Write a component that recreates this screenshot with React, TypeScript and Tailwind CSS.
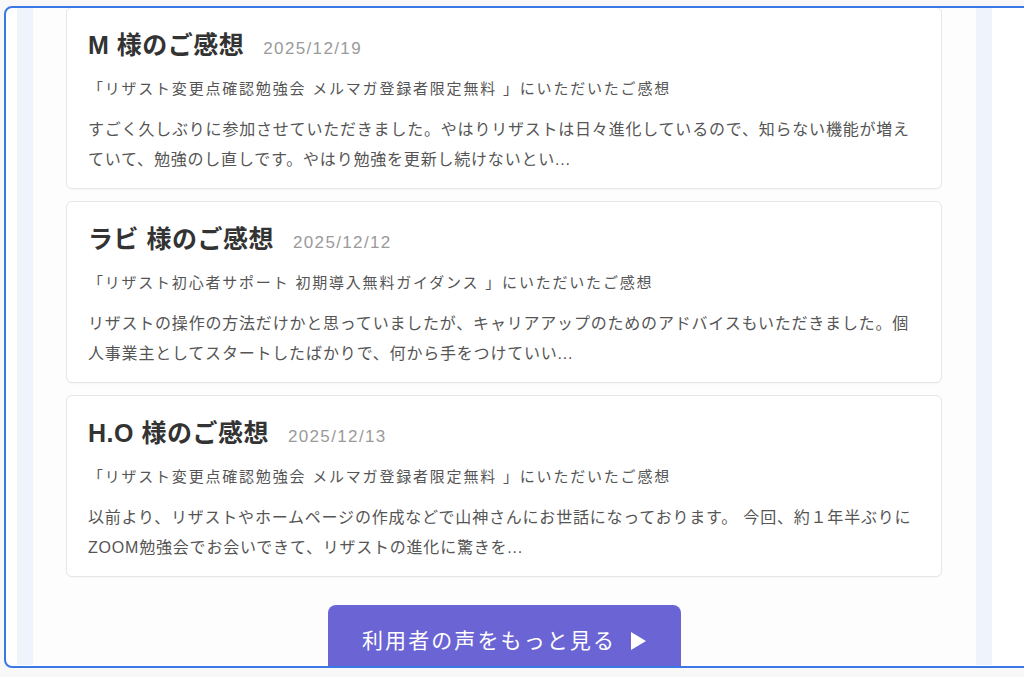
const reviews = [
  {
    name: "M",
    date: "2025/12/19",
    event: "「リザスト変更点確認勉強会 メルマガ登録者限定無料 」にいただいたご感想",
    body: "すごく久しぶりに参加させていただきました。やはりリザストは日々進化しているので、知らない機能が増えていて、勉強のし直しです。やはり勉強を更新し続けないとい...",
  },
  {
    name: "ラビ",
    date: "2025/12/12",
    event: "「リザスト初心者サポート 初期導入無料ガイダンス 」にいただいたご感想",
    body: "リザストの操作の方法だけかと思っていましたが、キャリアアップのためのアドバイスもいただきました。個人事業主としてスタートしたばかりで、何から手をつけていい...",
  },
  {
    name: "H.O",
    date: "2025/12/13",
    event: "「リザスト変更点確認勉強会 メルマガ登録者限定無料 」にいただいたご感想",
    body: "以前より、リザストやホームページの作成などで山神さんにお世話になっております。 今回、約１年半ぶりにZOOM勉強会でお会いできて、リザストの進化に驚きを...",
  },
];

const font = "font-['Liberation_Sans','Noto_Sans_CJK_JP',sans-serif]";

const ReviewCard = ({ r }: { r: (typeof reviews)[number] }) => (
  <div className="bg-white border border-[#e6e6e6] rounded-md px-[21px] pt-[20px] pb-[13px] shadow-[0_1px_2px_rgba(0,0,0,0.03)]">
    <div className="flex items-baseline">
      <h3 className="text-[25px] leading-[34px] font-bold tracking-[0.02em] text-[#333]">{r.name} 様のご感想</h3>
      <span className="ml-[19px] text-[17px] tracking-[0.08em] text-[#9a9a9a]">{r.date}</span>
    </div>
    <p className="mt-[15px] text-[15px] leading-[24px] tracking-[0.12em] text-[#555]">{r.event}</p>
    <p className="mt-[14px] text-[16px] leading-[30px] tracking-[0.05em] text-[#555]">{r.body}</p>
  </div>
);

export default function App() {
  return (
    <div className={`w-[1024px] h-[677px] overflow-hidden bg-[#f8f8f8] pt-[6px] pl-[4px] ${font}`}>
      <div className="w-[1040px] h-[662px] border-2 border-[#3b78e6] rounded-lg overflow-hidden bg-white pl-[11px]">
        <div className="w-[975px] h-full bg-[#eff3fc] px-[16px]">
          <main className="h-full bg-[#fdfdfd] pl-[33px] pr-[34px]">
            <div className="flex flex-col gap-[12px] -mt-[1px]">
              {reviews.map((r) => (
                <ReviewCard key={r.name} r={r} />
              ))}
            </div>
            <div className="flex justify-center mt-[28px]">
              <button className="w-[353px] h-[72px] rounded-lg bg-[#6b64d4] text-white flex items-center justify-center gap-[15px]">
                <span className="text-[21px] leading-[30px] tracking-[0.1em]">利用者の声をもっと見る</span>
                <svg width="15" height="18" viewBox="0 0 15 18" fill="currentColor">
                  <polygon points="0,0 15,9 0,18" />
                </svg>
              </button>
            </div>
          </main>
        </div>
      </div>
    </div>
  );
}
